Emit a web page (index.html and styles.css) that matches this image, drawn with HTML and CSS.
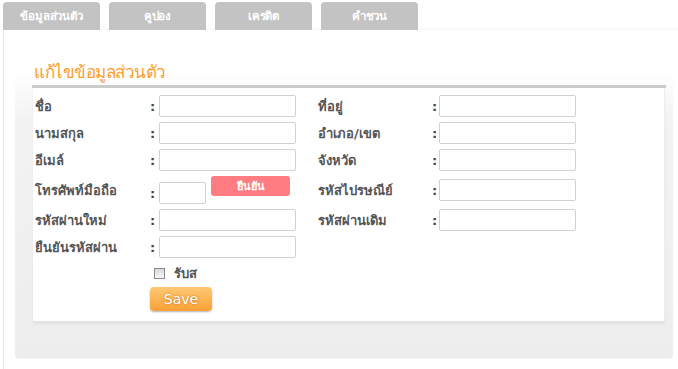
FILE: index.html
```html
<!DOCTYPE html>
<html lang="th">
<head>
  <meta charset="UTF-8">
  <meta name="viewport" content="width=device-width, initial-scale=1.0">
  <title>แก้ไขข้อมูลส่วนตัว</title>
  <link rel="stylesheet" href="styles.css">
</head>
<body>
  <div class="tabs">
    <div class="tab">ข้อมูลส่วนตัว</div>
    <div class="tab">คูปอง</div>
    <div class="tab">เครดิต</div>
    <div class="tab">คำชวน</div>
  </div>

  <div class="panel">
    <div class="content">
      <h2 class="title">แก้ไขข้อมูลส่วนตัว</h2>

      <form class="profile-form">
        <div class="grid">
          <label>ชื่อ</label><span class="colon">:</span><div class="ctl"><input type="text"></div>
          <label>ที่อยู่</label><span class="colon">:</span><div class="ctl"><input type="text"></div>

          <label>นามสกุล</label><span class="colon">:</span><div class="ctl"><input type="text"></div>
          <label>อำเภอ/เขต</label><span class="colon">:</span><div class="ctl"><input type="text"></div>

          <label>อีเมล์</label><span class="colon">:</span><div class="ctl"><input type="text"></div>
          <label>จังหวัด</label><span class="colon">:</span><div class="ctl"><input type="text"></div>

          <label>โทรศัพท์มือถือ</label><span class="colon low">:</span>
          <div class="ctl phone"><input type="text" class="short"><button type="button" class="btn-confirm">ยืนยัน</button></div>
          <label>รหัสไปรษณีย์</label><span class="colon">:</span><div class="ctl"><input type="text"></div>

          <label>รหัสผ่านใหม่</label><span class="colon">:</span><div class="ctl"><input type="password"></div>
          <label>รหัสผ่านเดิม</label><span class="colon">:</span><div class="ctl"><input type="password"></div>

          <label>ยืนยันรหัสผ่าน</label><span class="colon">:</span><div class="ctl"><input type="password"></div>
        </div>

        <div class="check-row">
          <input type="checkbox" id="rubs"><label for="rubs">รับส</label>
        </div>

        <button type="button" class="btn-save">Save</button>
      </form>
    </div>
  </div>
</body>
</html>
```

FILE: styles.css
```css
body {
  margin: 0;
  background-color: #fff;
  font-family: Tahoma, "DejaVu Sans", "Noto Sans", sans-serif;
}

.tabs {
  display: flex;
  gap: 9px;
  padding: 2px 0 0 3px;
  height: 28px;
}

.tab {
  width: 97px;
  height: 28px;
  line-height: 28px;
  background-color: #c3c3c3;
  border-radius: 4px 4px 0 0;
  color: #fff;
  font-size: 11.5px;
  font-weight: bold;
  letter-spacing: -0.2px;
  text-align: center;
}

.panel {
  margin-left: 3px;
  width: 658px;
  padding: 0 5px 12px 11px;
  background-color: #fff;
  border-left: 1px solid #ececec;
  box-shadow: 1px 0 3px rgba(0, 0, 0, 0.08);
}

.content {
  padding: 31px 7px 37px 17px;
  background: linear-gradient(#fff 0, #fff 40px, #f3f3f3 90px, #ededed 100%);
  border-radius: 0 0 3px 3px;
  box-shadow: 0 1px 1px rgba(0, 0, 0, 0.05);
}

.title {
  margin: 0;
  padding: 0 0 2px 2px;
  color: #f99d2c;
  font-size: 17px;
  font-weight: normal;
  letter-spacing: -0.5px;
  line-height: 22px;
  border-bottom: 3px solid #cbcbcb;
}

.profile-form {
  margin: 0 1px;
  padding: 7px 0 10px 2px;
  background-color: #fff;
  border-right: 1px solid #eee;
  box-shadow: 0 3px 3px rgba(0, 0, 0, 0.05);
}

.grid {
  display: grid;
  grid-template-columns: 115px 9px 159px 114px 7px 140px;
  grid-template-rows: 22px 22px 22px 28px 22px 22px;
  row-gap: 5px;
  align-items: center;
}

.grid label {
  color: #555;
  font-size: 13px;
  font-weight: bold;
}

.colon {
  color: #444;
  font-size: 13px;
  font-weight: bold;
}

.colon.low {
  align-self: end;
  margin-bottom: 3px;
}

.ctl {
  display: flex;
  align-items: center;
}

.ctl input {
  width: 137px;
  height: 22px;
  padding: 0 4px;
  box-sizing: border-box;
  border: 1px solid #cdd2d8;
  border-radius: 2px;
}

.phone {
  height: 28px;
  align-items: flex-start;
  gap: 5px;
}

.phone input.short {
  width: 47px;
  margin-top: 6px;
}

.btn-confirm {
  width: 79px;
  height: 20px;
  padding: 0;
  border: none;
  border-radius: 3px;
  background-color: #ff7c83;
  color: #fff;
  font-family: inherit;
  font-size: 11px;
  font-weight: bold;
  cursor: pointer;
}

.check-row {
  display: flex;
  align-items: center;
  gap: 9px;
  margin: 8px 0 0 119px;
  height: 14px;
}

.check-row input {
  appearance: none;
  width: 11px;
  height: 11px;
  margin: 0;
  border: 1px solid #8a8a8a;
  background: linear-gradient(#d8d8d8, #f8f8f8);
}

.check-row label {
  color: #555;
  font-size: 13px;
  font-weight: bold;
}

.btn-save {
  display: block;
  margin: 7px 0 0 115px;
  width: 62px;
  height: 24px;
  padding: 0;
  border: none;
  border-radius: 4px;
  background: linear-gradient(#ffc875, #f7a136);
  box-shadow: 0 1px 2px rgba(0, 0, 0, 0.3);
  color: #fff;
  font-family: Verdana, "DejaVu Sans", sans-serif;
  font-size: 14px;
  text-shadow: 0 0 2px #b86a10;
  cursor: pointer;
}
```
